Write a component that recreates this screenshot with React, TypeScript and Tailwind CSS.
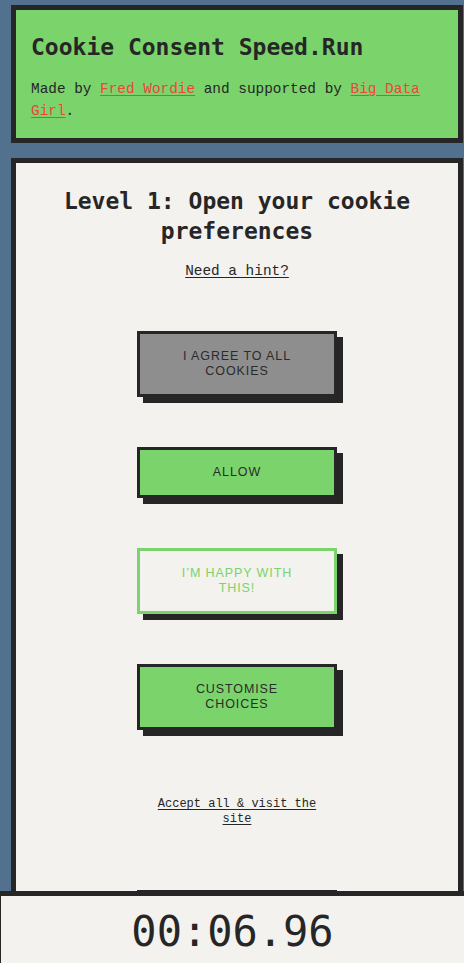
import React from 'react';

const mono = "font-['Liberation_Mono','DejaVu_Sans_Mono',monospace]";
const heading = "font-['DejaVu_Sans_Mono',monospace] font-bold";
const sans = "font-['Liberation_Sans',Arial,sans-serif]";

type BtnProps = { label: string; variant: 'gray' | 'green' | 'outline' };

function FakeButton({ label, variant }: BtnProps) {
  const look =
    variant === 'gray'
      ? 'bg-[#8e8e8e] border-[#262626] text-[#2b2b2b]'
      : variant === 'green'
        ? 'bg-[#7bd36b] border-[#262626] text-[#2b2b2b]'
        : 'bg-[#f3f2ee] border-[#7bd36b] text-[#7bd36b]';
  return (
    <button
      className={`w-[200px] border-[3px] px-[30px] py-[15px] uppercase text-[12.5px] leading-[15px] tracking-[0.9px] shadow-[6px_6px_0_#262626] ${sans} ${look}`}
    >
      {label}
    </button>
  );
}

export default function App() {
  return (
    <div className="min-h-[963px] bg-[#52718f] pt-[5px] pl-[11px] pr-[1px] overflow-hidden">
      <header className="border-[5px] border-[#262626] bg-[#7bd36b] px-[15px] pt-[22px] pb-[16px] text-[#262626]">
        <h1 className={`${heading} text-[23px] leading-[30px]`}>Cookie Consent Speed.Run</h1>
        <p className={`${mono} mt-[16px] text-[14.4px] leading-[22px]`}>
          Made by{' '}
          <a className="text-[#f0433a] underline underline-offset-[2px]" href="#">
            Fred Wordie
          </a>{' '}
          and supported by{' '}
          <a className="text-[#f0433a] underline underline-offset-[2px]" href="#">
            Big Data Girl
          </a>
          .
        </p>
      </header>

      <main className="mt-[15px] border-[5px] border-[#262626] bg-[#f3f2ee] px-[20px] pt-[23px] pb-[100px] text-[#262626]">
        <h2 className={`${heading} text-center text-[23px] leading-[30px]`}>
          Level 1: Open your cookie preferences
        </h2>
        <div className="mt-[11px] text-center">
          <a className={`${mono} text-[14.4px] leading-[22px] underline underline-offset-[2px]`} href="#">
            Need a hint?
          </a>
        </div>

        <div className="mt-[49px] flex flex-col items-center gap-[50px]">
          <FakeButton label="I agree to all cookies" variant="gray" />
          <FakeButton label="Allow" variant="green" />
          <FakeButton label="I’m happy with this!" variant="outline" />
          <FakeButton label="Customise choices" variant="green" />
        </div>

        <div className="mt-[67px] flex justify-center">
          <a
            className={`${mono} block w-[170px] text-center text-[12px] leading-[15px] underline underline-offset-[2px]`}
            href="#"
          >
            Accept all &amp; visit the site
          </a>
        </div>

        <div className="mt-[63px] flex justify-center">
          <FakeButton label="Reject all" variant="green" />
        </div>
      </main>

      <footer className="fixed bottom-0 left-0 right-0 h-[72px] border-t-[5px] border-l border-[#262626] bg-[#f3f2ee] flex items-center justify-center pt-[5px]">
        <span className="font-['DejaVu_Sans_Mono',monospace] text-[42px] leading-none text-[#262626]">00:06.96</span>
      </footer>
    </div>
  );
}
